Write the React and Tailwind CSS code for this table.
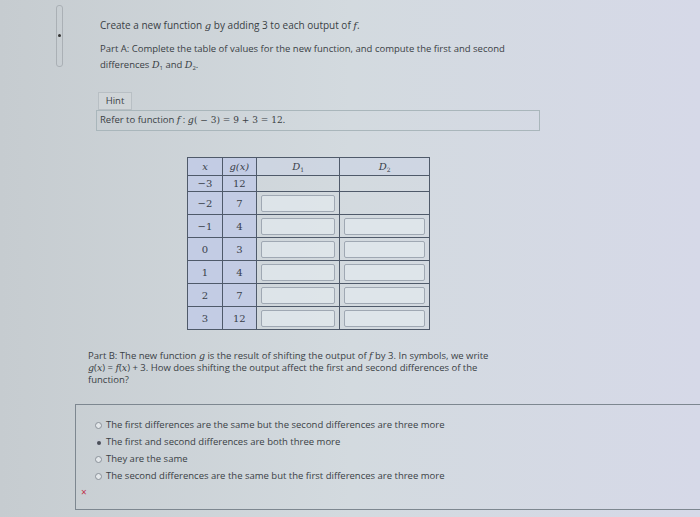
import React from 'react';

const rows = [
  { x: '−3', g: '12', d1: false, d2: false },
  { x: '−2', g: '7', d1: true, d2: false },
  { x: '−1', g: '4', d1: true, d2: true },
  { x: '0', g: '3', d1: true, d2: true },
  { x: '1', g: '4', d1: true, d2: true },
  { x: '2', g: '7', d1: true, d2: true },
  { x: '3', g: '12', d1: true, d2: true },
];

const options = [
  'The first differences are the same but the second differences are three more',
  'The first and second differences are both three more',
  'They are the same',
  'The second differences are the same but the first differences are three more',
];

function M({ children }) {
  return <span className="font-['DejaVu_Serif',serif] italic">{children}</span>;
}

function Box() {
  return <div className="mx-[4px] h-[17px] rounded-[2px] border border-[#9fa8b3] bg-[#e3e9ee]/70" />;
}

function App() {
  return (
    <div className="flex h-[517px] w-[700px] overflow-hidden bg-linear-to-r from-[#c6ccd0] via-[#d3dadf] to-[#d6d9e8] font-['Open_Sans',sans-serif] text-[9.5px] text-[#3a3f45]">
      <div className="w-[75px] shrink-0">
        <div className="ml-[56px] mt-[5px] flex h-[62px] w-[7px] items-start justify-center rounded-[3px] border border-[#aab0b5]">
          <div className="mt-[28px] h-[3px] w-[3px] rounded-full bg-[#333]" />
        </div>
      </div>

      <div className="flex min-w-0 flex-1 flex-col">
        <div className="pl-[25px] pt-[19px] text-[10px] leading-[13px]">
          Create a new function <M>g</M> by adding 3 to each output of <M>f</M>.
        </div>
        <div className="pl-[25px] pt-[9px] leading-[16px]">
          Part A: Complete the table of values for the new function, and compute the first and second
          <br />
          differences <M>D</M><sub className="text-[6px]">1</sub> and <M>D</M><sub className="text-[6px]">2</sub>.
        </div>

        <div className="ml-[23px] mt-[19px] flex h-[18px] w-[34px] items-center justify-center border border-[#b8bfc4] bg-[#d0d5d8]">
          Hint
        </div>
        <div className="ml-[21px] flex h-[21px] w-[444px] items-center border border-[#a9b6bb] pl-[3px]">
          Refer to function&nbsp;<M>f</M>&nbsp;:&nbsp;<M>g</M>
          <span className="font-['DejaVu_Serif',serif] text-[9px]">(&nbsp;−&nbsp;3)&nbsp;=&nbsp;9&nbsp;+&nbsp;3&nbsp;=&nbsp;12.</span>
        </div>

        <table className="ml-[112px] mt-[26px] w-[243px] border-collapse font-['DejaVu_Serif',serif] text-[10px] text-[#3a3f4a]">
          <thead>
            <tr className="h-[18px]">
              <th className="w-[35px] border border-[#4f5a6a] bg-[#c3cce4] font-normal italic">x</th>
              <th className="w-[34px] border border-[#4f5a6a] bg-[#c3cce4] font-normal italic">g(x)</th>
              <th className="w-[84px] border border-[#4f5a6a] bg-[#cbd4e4]/60 font-normal italic">
                D<sub className="text-[6px] not-italic">1</sub>
              </th>
              <th className="w-[90px] border border-[#4f5a6a] bg-[#cbd4e4]/60 font-normal italic">
                D<sub className="text-[6px] not-italic">2</sub>
              </th>
            </tr>
          </thead>
          <tbody>
            {rows.map((r, i) => (
              <tr key={r.x} className={i === 0 ? 'h-[16px]' : 'h-[23px]'}>
                <td className="border border-[#4f5a6a] bg-[#c3cce4] text-center">{r.x}</td>
                <td className="border border-[#4f5a6a] bg-[#c3cce4] text-center">{r.g}</td>
                <td className="border border-[#4f5a6a]">{r.d1 && <Box />}</td>
                <td className="border border-[#4f5a6a]">{r.d2 && <Box />}</td>
              </tr>
            ))}
          </tbody>
        </table>

        <div className="ml-[13px] mt-[20px] whitespace-nowrap leading-[12px]">
          Part B: The new function <M>g</M> is the result of shifting the output of <M>f</M> by 3. In symbols, we write
          <br />
          <M>g</M>(<M>x</M>) = <M>f</M>(<M>x</M>) + 3. How does shifting the output affect the first and second differences of the
          <br />
          function?
        </div>

        <div className="mt-[18px] flex h-[106px] flex-col border border-r-0 border-[#7d8790] pl-[19px] pt-[12px]">
          {options.map((o, i) => (
            <div key={o} className="flex h-[17px] items-center gap-[4px]">
              {i === 1 ? (
                <span className="flex h-[7px] w-[7px] items-center justify-center rounded-full bg-[#c9ced6]">
                  <span className="h-[4px] w-[4px] rounded-full bg-[#4a4f58]" />
                </span>
              ) : (
                <span className="h-[7px] w-[7px] rounded-full border border-[#8a9199] bg-[#e3e7ea]" />
              )}
              <span>{o}</span>
            </div>
          ))}
          <div className="-ml-[14px] mt-[2px] text-[10px] leading-[10px] text-[#c0304a]">×</div>
        </div>
      </div>
    </div>
  );
}

export default App;
